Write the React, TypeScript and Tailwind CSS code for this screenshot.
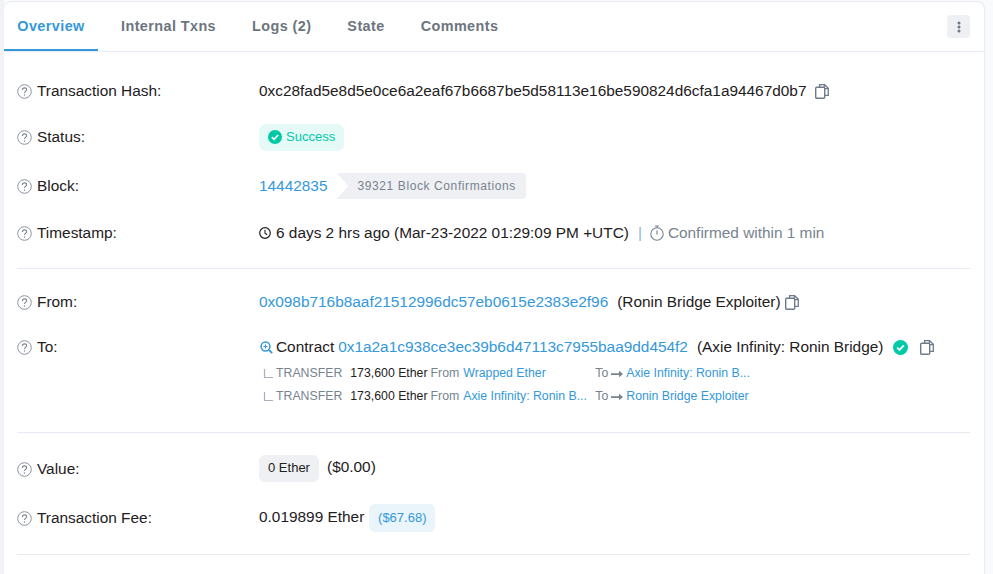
import React from 'react'

const HelpIcon = () => (
  <svg width="15" height="15" viewBox="0 0 15 15" fill="none" className="shrink-0">
    <circle cx="7.5" cy="7.5" r="6.8" stroke="#8c93a3" strokeWidth="1" />
    <path d="M5.4 5.9c0-1.2.9-2 2.1-2s2.1.8 2.1 1.9c0 1.6-2.1 1.6-2.1 3.2" stroke="#77838f" strokeWidth="1.1" />
    <circle cx="7.5" cy="11" r=".7" fill="#77838f" />
  </svg>
)

const CopyIcon = () => (
  <svg width="14" height="15" viewBox="0 0 14 15" fill="none" className="shrink-0">
    <path d="M4.6 3V.7h5l3.7 3.6V11.4H10" stroke="#6f7b8a" strokeWidth="1.3" />
    <path d="M9.3.7v3.9h4" stroke="#6f7b8a" strokeWidth="1.1" />
    <rect x=".7" y="3.2" width="9" height="11" rx="1" fill="#fff" stroke="#6f7b8a" strokeWidth="1.4" />
  </svg>
)

const CheckCircle = ({ size }: { size: number }) => (
  <svg width={size} height={size} viewBox="0 0 16 16" className="shrink-0">
    <circle cx="8" cy="8" r="8" fill="#00c9a7" />
    <path d="M4.4 8.2l2.5 2.4 4.7-4.9" fill="none" stroke="#fff" strokeWidth="2" />
  </svg>
)

const Divider = () => <hr className="border-0 border-t border-[#e7eaf3]" />

const Label = ({ children }: { children: React.ReactNode }) => (
  <div className="flex w-[242px] shrink-0 items-center gap-[5px] text-[#1e2022]">
    <HelpIcon />
    <span>{children}</span>
  </div>
)

const Row = ({ label, className, children }: { label: string; className: string; children: React.ReactNode }) => (
  <div className={`flex items-center ${className}`}>
    <Label>{label}</Label>
    <div className="flex items-center text-[#1e2022]">{children}</div>
  </div>
)

const Corner = () => (
  <svg width="13" height="10" viewBox="0 0 13 10" fill="none" className="ml-[4px] shrink-0">
    <path d="M1.5 0v8.5H10" stroke="#a9afbb" strokeWidth="1.2" />
  </svg>
)

const Arrow = () => (
  <svg width="12" height="8" viewBox="0 0 12 8" className="mx-[3px] shrink-0">
    <path d="M0 3.2h8V.8L12 4 8 7.2V4.9H0z" fill="#77838f" />
  </svg>
)

const TransferRow = ({ from, to }: { from: string; to: string }) => (
  <div className="flex h-[23px] items-center text-[12.3px] leading-none">
    <Corner />
    <span className="text-[#77838f]">TRANSFER</span>
    <span className="ml-[8px] text-[#1e2022]">173,600 Ether</span>
    <span className="ml-[3px] text-[#77838f]">From</span>
    <a className="ml-[4px] w-[132px] whitespace-nowrap text-[#3498db]">{from}</a>
    <span className="text-[#77838f]">To</span>
    <Arrow />
    <a className="text-[#3498db]">{to}</a>
  </div>
)

export default function App() {
  const tabs = ['Internal Txns', 'Logs (2)', 'State', 'Comments']

  return (
    <div className="h-[574px] overflow-hidden border-l-4 border-[#f1f2f6] bg-[#f9fafc] pt-[1px] font-['Liberation_Sans',Arial,sans-serif] text-[15.4px] leading-[20px]">
      <div className="h-[600px] w-[981px] rounded-[8px] border-r border-t border-[#e7eaf3] bg-white">
        <div className="flex h-[50px] items-stretch justify-between border-b border-[#e7eaf3] pr-[14px]">
          <div className="flex gap-[36px] text-[14.4px] font-bold tracking-[.42px] text-[#6c757e]">
            <div className="-mr-[13px] flex w-[94px] items-center justify-center border-b-2 border-[#3498db] text-[#3498db]">Overview</div>
            {tabs.map(tab => (
              <div key={tab} className="flex items-center pb-[2px]">{tab}</div>
            ))}
          </div>
          <div className="flex items-center">
            <div className="flex h-[23px] w-[23px] items-center justify-center rounded-[4px] bg-[#eff0f3]">
              <svg width="4" height="12" viewBox="0 0 4 12" fill="#6b7686">
                <circle cx="2" cy="2" r="1.5" />
                <circle cx="2" cy="6" r="1.5" />
                <circle cx="2" cy="10" r="1.5" />
              </svg>
            </div>
          </div>
        </div>

        <div className="w-[966px] pl-[13px]">
          <Row label="Transaction Hash:" className="mt-[27px] h-[24px]">
            <span>0xc28fad5e8d5e0ce6a2eaf67b6687be5d58113e16be590824d6cfa1a94467d0b7</span>
            <span className="ml-[9px]"><CopyIcon /></span>
          </Row>
          <Row label="Status:" className="mt-[22px] h-[24px]">
            <div className="flex h-[27px] w-[85px] items-center gap-[4px] rounded-[7px] bg-[#e5f9f6] pl-[9px] text-[13px] text-[#00c9a7]">
              <CheckCircle size={14} />
              Success
            </div>
          </Row>
          <Row label="Block:" className="mt-[25px] h-[24px]">
            <a className="text-[#3498db]">14442835</a>
            <div className="ml-[9px] flex h-[26px] w-[190px] items-center rounded-r-[4px] bg-[#eff0f3] pl-[21px] text-[12px] tracking-[.6px] text-[#77838f] [clip-path:polygon(0_0,100%_0,100%_100%,0_100%,12px_50%)]">
              39321 Block Confirmations
            </div>
          </Row>
          <Row label="Timestamp:" className="mt-[23px] h-[24px]">
            <svg width="12" height="12" viewBox="0 0 12 12" fill="none" className="mr-[5px]">
              <circle cx="6" cy="6" r="5.3" stroke="#1e2022" strokeWidth="1.2" />
              <path d="M6 2.8V6.3l2.2 1.4" stroke="#1e2022" strokeWidth="1.1" />
            </svg>
            <span>6 days 2 hrs ago (Mar-23-2022 01:29:09 PM +UTC)</span>
            <span className="ml-[9px] text-[#8fb4d8]">|</span>
            <svg width="14" height="16" viewBox="0 0 14 16" fill="none" className="ml-[8px] mr-[4px]">
              <circle cx="7" cy="9" r="6.2" stroke="#77838f" strokeWidth="1.1" />
              <path d="M7 5.5V9.5M5 1h4" stroke="#77838f" strokeWidth="1.2" />
              <path d="M7 1v2" stroke="#77838f" />
            </svg>
            <span className="text-[#77838f]">Confirmed within 1 min</span>
          </Row>

          <div className="mt-[23px]"><Divider /></div>

          <Row label="From:" className="mt-[21px] h-[24px]">
            <a className="text-[#3498db]">0x098b716b8aaf21512996dc57eb0615e2383e2f96</a>
            <span className="ml-[9px]">(Ronin Bridge Exploiter)</span>
            <span className="ml-[4px]"><CopyIcon /></span>
          </Row>

          <div className="mt-[21px] flex items-start">
            <div className="flex h-[24px] items-center"><Label>To:</Label></div>
            <div>
              <div className="flex h-[24px] items-center text-[#1e2022]">
                <svg width="13" height="13" viewBox="0 0 13 13" fill="none" className="ml-[1px] mr-[3px]">
                  <circle cx="5.5" cy="5.5" r="4.4" stroke="#3498db" strokeWidth="1.5" />
                  <path d="M9 9l3.2 3.2" stroke="#3498db" strokeWidth="1.8" />
                  <path d="M3.4 5.5h4.2M5.5 3.4v4.2" stroke="#3498db" strokeWidth="1.1" />
                </svg>
                <span>Contract</span>
                <a className="ml-[4px] text-[#3498db]">0x1a2a1c938ce3ec39b6d47113c7955baa9dd454f2</a>
                <span className="ml-[9px]">(Axie Infinity: Ronin Bridge)</span>
                <span className="ml-[10px]"><CheckCircle size={15} /></span>
                <span className="ml-[12px]"><CopyIcon /></span>
              </div>
              <div className="mt-[3px]">
                <TransferRow from="Wrapped Ether" to="Axie Infinity: Ronin B..." />
                <TransferRow from="Axie Infinity: Ronin B..." to="Ronin Bridge Exploiter" />
              </div>
            </div>
          </div>

          <div className="mt-[24px]"><Divider /></div>

          <Row label="Value:" className="mt-[24px] h-[24px]">
            <div className="flex h-[27px] w-[60px] -translate-y-[1px] items-center justify-center rounded-[6px] bg-[#eff0f3] text-[13px]">0 Ether</div>
            <span className="ml-[8px] -translate-y-[2px]">($0.00)</span>
          </Row>
          <Row label="Transaction Fee:" className="mt-[25px] h-[24px]">
            <span className="-translate-y-[1px]">0.019899 Ether</span>
            <div className="ml-[5px] flex h-[28px] w-[66px] items-center justify-center rounded-[6px] bg-[#e9f4fb] text-[13px] text-[#3498db]">($67.68)</div>
          </Row>

          <div className="mt-[24px]"><Divider /></div>
        </div>
      </div>
    </div>
  )
}
